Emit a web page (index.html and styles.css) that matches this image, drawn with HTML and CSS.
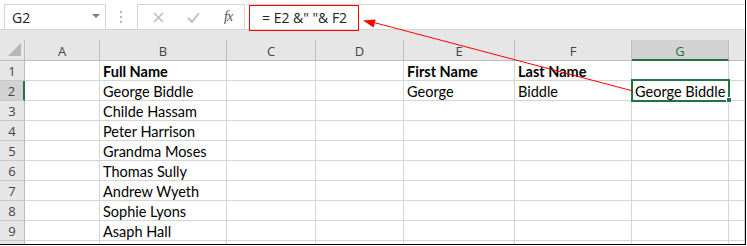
FILE: index.html
```html
<!DOCTYPE html>
<html lang="en">
  <head>
    <meta charset="UTF-8" />
    <meta name="viewport" content="width=device-width, initial-scale=1.0" />
    <link rel="stylesheet" href="styles.css">
    <title>Concatenate names</title>
  </head>
  <body>
    <div class="sheet">
      <div class="toolbar">
        <div class="name-box">
          <span>G2</span>
          <svg class="name-box__caret" width="8" height="5" viewBox="0 0 8 5"><path d="M0 0h8L4 4z" fill="#7a7a7a"/></svg>
        </div>
        <div class="grip">
          <svg width="3" height="12" viewBox="0 0 3 12"><rect x="0" y="0" width="2" height="2" fill="#b5b5b5"/><rect x="0" y="5" width="2" height="2" fill="#b5b5b5"/><rect x="0" y="10" width="2" height="2" fill="#b5b5b5"/></svg>
        </div>
        <div class="fx-box">
          <svg class="fx-box__cancel" width="11" height="11" viewBox="0 0 11 11"><path d="M1 1l9 9M10 1l-9 9" stroke="#bdbdbd" stroke-width="1.6"/></svg>
          <svg class="fx-box__enter" width="13" height="11" viewBox="0 0 13 11"><path d="M1 6l4 4 7-9" stroke="#bdbdbd" stroke-width="1.8" fill="none"/></svg>
          <span class="fx-box__label">fx</span>
        </div>
        <div class="formula">
          <span class="formula__text">= E2 &amp;" "&amp; F2</span>
        </div>
      </div>

      <div class="grid">
        <div class="hdr corner">
          <svg width="14" height="13" viewBox="0 0 14 13"><path d="M13 0v13H0z" fill="#b7b7b7"/></svg>
        </div>
        <div class="hdr col">A</div>
        <div class="hdr col">B</div>
        <div class="hdr col">C</div>
        <div class="hdr col">D</div>
        <div class="hdr col">E</div>
        <div class="hdr col">F</div>
        <div class="hdr col col--active">G</div>
        <div class="hdr col col--rest"></div>

        <div class="hdr row">1</div>
        <div class="cell"></div><div class="cell bold">Full Name</div><div class="cell"></div><div class="cell"></div>
        <div class="cell bold">First Name</div><div class="cell bold">Last Name</div><div class="cell"></div><div class="cell"></div>

        <div class="hdr row row--active">2</div>
        <div class="cell"></div><div class="cell">George Biddle</div><div class="cell"></div><div class="cell"></div>
        <div class="cell">George</div><div class="cell">Biddle</div><div class="cell">George Biddle</div><div class="cell"></div>

        <div class="hdr row">3</div>
        <div class="cell"></div><div class="cell">Childe Hassam</div><div class="cell"></div><div class="cell"></div>
        <div class="cell"></div><div class="cell"></div><div class="cell"></div><div class="cell"></div>

        <div class="hdr row">4</div>
        <div class="cell"></div><div class="cell">Peter Harrison</div><div class="cell"></div><div class="cell"></div>
        <div class="cell"></div><div class="cell"></div><div class="cell"></div><div class="cell"></div>

        <div class="hdr row">5</div>
        <div class="cell"></div><div class="cell">Grandma Moses</div><div class="cell"></div><div class="cell"></div>
        <div class="cell"></div><div class="cell"></div><div class="cell"></div><div class="cell"></div>

        <div class="hdr row">6</div>
        <div class="cell"></div><div class="cell">Thomas Sully</div><div class="cell"></div><div class="cell"></div>
        <div class="cell"></div><div class="cell"></div><div class="cell"></div><div class="cell"></div>

        <div class="hdr row">7</div>
        <div class="cell"></div><div class="cell">Andrew Wyeth</div><div class="cell"></div><div class="cell"></div>
        <div class="cell"></div><div class="cell"></div><div class="cell"></div><div class="cell"></div>

        <div class="hdr row">8</div>
        <div class="cell"></div><div class="cell">Sophie Lyons</div><div class="cell"></div><div class="cell"></div>
        <div class="cell"></div><div class="cell"></div><div class="cell"></div><div class="cell"></div>

        <div class="hdr row">9</div>
        <div class="cell"></div><div class="cell">Asaph Hall</div><div class="cell"></div><div class="cell"></div>
        <div class="cell"></div><div class="cell"></div><div class="cell"></div><div class="cell"></div>

        <div class="hdr row"></div>
        <div class="cell"></div><div class="cell"></div><div class="cell"></div><div class="cell"></div>
        <div class="cell"></div><div class="cell"></div><div class="cell"></div><div class="cell"></div>
      </div>

      <!-- active cell G2 and its fill handle -->
      <div class="selection"><span class="selection__handle"></span></div>

      <!-- annotation arrow from G2 to the formula -->
      <svg class="arrow" width="746" height="245" viewBox="0 0 746 245">
        <line x1="633" y1="91" x2="372" y2="22" stroke="#ff0000" stroke-width="1"/>
        <path d="M363 20.5L375.6 19.6L373.6 27.4z" fill="#ff0000"/>
      </svg>
    </div>
  </body>
</html>
```

FILE: styles.css
```css
* {
  box-sizing: border-box;
}
body {
  margin: 0;
  background: #fff;
}
.sheet {
  position: relative;
  width: 746px;
  height: 245px;
  border-right: 1px solid #000;
  border-bottom: 1px solid #000;
  overflow: hidden;
  font-family: "Open Sans", "Liberation Sans", sans-serif;
}

/* formula bar */
.toolbar {
  height: 30px;
  display: flex;
  align-items: flex-start;
  padding: 4px 0 0 4px;
  background: #fff;
  border-bottom: 1px solid #d0d0d0;
}
.name-box {
  width: 102px;
  height: 26px;
  border: 1px solid #d4d4d4;
  display: flex;
  align-items: center;
  justify-content: space-between;
  padding: 0 5px 0 7px;
  font-size: 14px;
  color: #222;
}
.name-box__caret {
  margin-top: -2px;
}
.grip {
  width: 31px;
  height: 26px;
  display: flex;
  align-items: center;
  justify-content: center;
}
.fx-box {
  width: 108px;
  height: 26px;
  border: 1px solid #d4d4d4;
  display: flex;
  align-items: center;
  padding: 0 0 0 15px;
}
.fx-box__enter {
  margin-left: 23px;
}
.fx-box__label {
  margin-left: 24px;
  font-family: "Liberation Serif", serif;
  font-style: italic;
  font-size: 14px;
  color: #555;
  letter-spacing: -1px;
}
.formula {
  flex: 1;
  height: 26px;
  margin-left: 2px;
  border-top: 1px solid #d4d4d4;
  border-bottom: 1px solid #d4d4d4;
  padding: 0 0 0 2px;
}
.formula__text {
  display: inline-block;
  width: 110px;
  height: 26px;
  border: 1px solid #ff0000;
  padding-left: 12px;
  font-size: 14px;
  line-height: 24px;
  color: #222;
}

/* sheet grid */
.grid {
  display: grid;
  grid-template-columns: 25px 75px 127px 89px 88px 111px 117px 97px 1fr;
  grid-template-rows: 21px;
  grid-auto-rows: 20px;
  background: #e6e6e6;
  padding-top: 10px;
}
.hdr {
  background: #e6e6e6;
  color: #444;
  font-size: 13px;
  display: flex;
  align-items: center;
  justify-content: center;
}
.corner {
  border-right: 1px solid #bdbdbd;
  border-bottom: 1px solid #bdbdbd;
  align-items: flex-end;
  justify-content: flex-end;
  padding: 0 2px 4px 0;
}
.col {
  border-right: 1px solid #bdbdbd;
  border-bottom: 1px solid #bdbdbd;
  padding-top: 2px;
}
.col--rest {
  border-right: none;
}
.col--active {
  background: #d2d2d2;
  color: #217346;
  border-bottom: 2px solid #217346;
}
.row {
  border-right: 1px solid #bdbdbd;
  border-bottom: 1px solid #c8c8c8;
}
.row--active {
  background: #d2d2d2;
  border-right: 2px solid #217346;
}
.cell {
  background: #fff;
  border-right: 1px solid #d4d4d4;
  border-bottom: 1px solid #d4d4d4;
  padding: 1px 0 0 3px;
  font-family: "Lato", "Liberation Sans", sans-serif;
  font-size: 14.5px;
  line-height: 19px;
  color: #000;
  white-space: nowrap;
}
.bold {
  font-weight: bold;
}

/* overlays */
.selection {
  position: absolute;
  left: 631px;
  top: 79px;
  width: 99px;
  height: 23px;
  border: 2px solid #217346;
}
.selection__handle {
  position: absolute;
  right: -4px;
  bottom: -3px;
  width: 6px;
  height: 6px;
  background: #217346;
  border: 1px solid #fff;
}
.arrow {
  position: absolute;
  left: 0;
  top: 0;
  pointer-events: none;
}
```
